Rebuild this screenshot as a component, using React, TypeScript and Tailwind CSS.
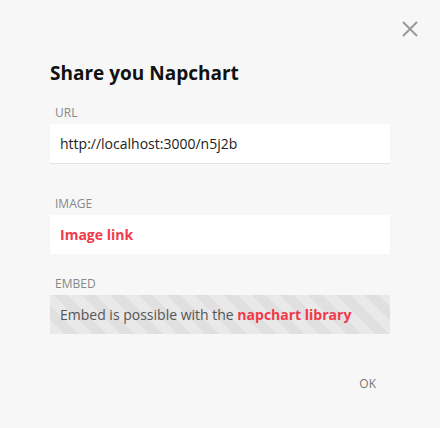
export default function App() {
  return (
    <div className="relative w-[440px] h-[428px] bg-[#f7f7f7] font-['Open_Sans','Noto_Sans',sans-serif] overflow-hidden">
      {/* close button */}
      <button className="absolute left-[401px] top-[20px] w-[18px] h-[18px] flex items-center justify-center" aria-label="close">
        <svg width="16" height="16" viewBox="0 0 16 16" fill="none" stroke="#9a9a9a" strokeWidth="2">
          <path d="M1 1l14 14M15 1L1 15" />
        </svg>
      </button>

      <div className="flex flex-col pl-[50px] pr-[50px] pt-[59px]">
        <h2 className="text-[19px] leading-[28px] font-bold text-[#111]">Share you Napchart</h2>

        <div className="mt-[18px] pl-[5px] text-[12px] leading-[16px] text-[#888]">URL</div>
        <div className="mt-[3px] h-[40px] bg-white border-b border-[#e3e3e3] flex items-center px-[10px] text-[14px] text-[#222]">
          http://localhost:3000/n5j2b
        </div>

        <div className="mt-[32px] pl-[5px] text-[12px] leading-[16px] text-[#888]">IMAGE</div>
        <div className="mt-[3px] h-[39px] bg-white flex items-center px-[10px]">
          <a className="text-[14px] font-bold text-[#f03a4a]">Image link</a>
        </div>

        <div className="mt-[22px] pl-[5px] text-[12px] leading-[16px] text-[#888]">EMBED</div>
        <div className="mt-[3px] h-[39px] flex items-center px-[10px] text-[14px] text-[#555] bg-[repeating-linear-gradient(45deg,#e9e9e9_0px,#e9e9e9_10px,#e0e0e0_10px,#e0e0e0_20px)]">
          <span>
            Embed is possible with the <a className="font-bold text-[#f03a4a]">napchart library</a>
          </span>
        </div>

        <div className="flex justify-end mt-[42px] pr-[14px]">
          <button className="text-[12px] leading-[16px] text-[#777]">OK</button>
        </div>
      </div>
    </div>
  );
}
